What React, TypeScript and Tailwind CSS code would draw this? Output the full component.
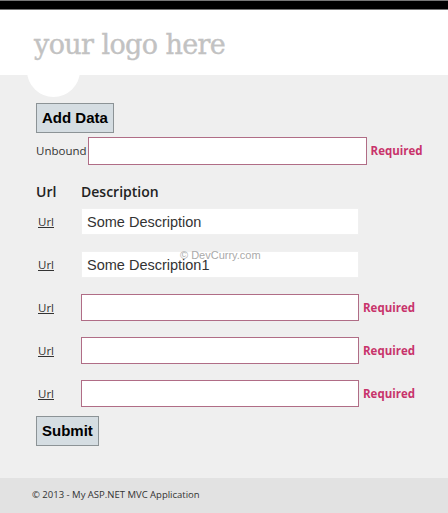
import { useState } from "react";

type Row = { id: number; description: string; valid: boolean };

const initialRows: Row[] = [
    { id: 1, description: "Some Description", valid: true },
    { id: 2, description: "Some Description1", valid: true },
    { id: 3, description: "", valid: false },
    { id: 4, description: "", valid: false },
    { id: 5, description: "", valid: false },
];

const sans = "font-['Open_Sans','Noto_Sans',sans-serif]";
const arial = "font-['Liberation_Sans',Arial,sans-serif]";

const App = () => {
    const [rows, setRows] = useState<Row[]>(initialRows);
    const [unbound, setUnbound] = useState("");

    const updateRow = (id: number, value: string) => {
        setRows(prev => prev.map(r => (r.id === id ? { ...r, description: value } : r)));
    };

    return (
        <div className="w-[448px] h-[513px] bg-[#efefef] flex flex-col overflow-hidden">
            {/* barra superior */}
            <div className="h-[10px] bg-black border-t border-b border-[#777]" />

            {/* cabecera con logo */}
            <header className="relative h-[65px] bg-white">
                <div className="absolute left-[27px] top-[34px] w-[53px] h-[53px] rounded-full bg-white" />
                <p className="relative pl-[34px] pt-[19px] text-[27px] leading-[32px] text-[#c2c2c2] font-['DejaVu_Serif',serif] tracking-[-0.6px] [-webkit-text-stroke:0.4px_#c2c2c2]">
                    your logo here
                </p>
            </header>

            <main className="flex-1 pl-[36px] pt-[28px]">
                <button className={`h-[30px] px-[5px] bg-[#d5dde2] border border-[#8c9396] text-[15px] font-bold text-black ${arial}`}>
                    Add Data
                </button>

                <div className="flex items-center mt-[4px] h-[28px]">
                    <span className={`text-[11.5px] text-[#333] ${sans}`}>Unbound</span>
                    <input
                        value={unbound}
                        onChange={e => setUnbound(e.target.value)}
                        className="ml-[1px] w-[279px] h-[28px] bg-white border border-[#b06d86] outline-none"
                    />
                    <span className={`ml-[4px] text-[11.5px] font-bold text-[#c8336b] ${sans}`}>Required</span>
                </div>

                <div className={`flex mt-[16px] text-[14px] font-semibold text-[#222] ${sans}`}>
                    <span className="w-[45px]">Url</span>
                    <span>Description</span>
                </div>

                <div className="relative mt-[6px] flex flex-col gap-[16px]">
                    {rows.map(row => (
                        <div key={row.id} className="flex items-center h-[27px]">
                            <a href="#" className={`w-[45px] pl-[2px] text-[11.5px] underline text-[#333] ${sans}`}>
                                Url
                            </a>
                            <input
                                value={row.description}
                                onChange={e => updateRow(row.id, e.target.value)}
                                className={`w-[278px] h-[27px] px-[5px] bg-white text-[14.5px] text-[#333] outline-none ${arial} ${row.valid ? "border border-[#f0f0f0]" : "border border-[#b06d86]"}`}
                            />
                            {!row.valid && (
                                <span className={`ml-[4px] text-[11.5px] font-bold text-[#c8336b] ${sans}`}>Required</span>
                            )}
                        </div>
                    ))}
                    <span className={`absolute left-[144px] top-[39px] text-[11px] text-[#aaa] ${arial}`}>© DevCurry.com</span>
                </div>

                <button className={`mt-[9px] h-[30px] px-[5px] bg-[#d5dde2] border border-[#8c9396] text-[15px] font-bold text-black ${arial}`}>
                    Submit
                </button>
            </main>

            <footer className="h-[35px] bg-[#e2e2e2] pl-[32px] flex items-center">
                <span className={`text-[9.5px] text-[#333] ${sans}`}>© 2013 - My ASP.NET MVC Application</span>
            </footer>
        </div>
    );
};

export default App;
